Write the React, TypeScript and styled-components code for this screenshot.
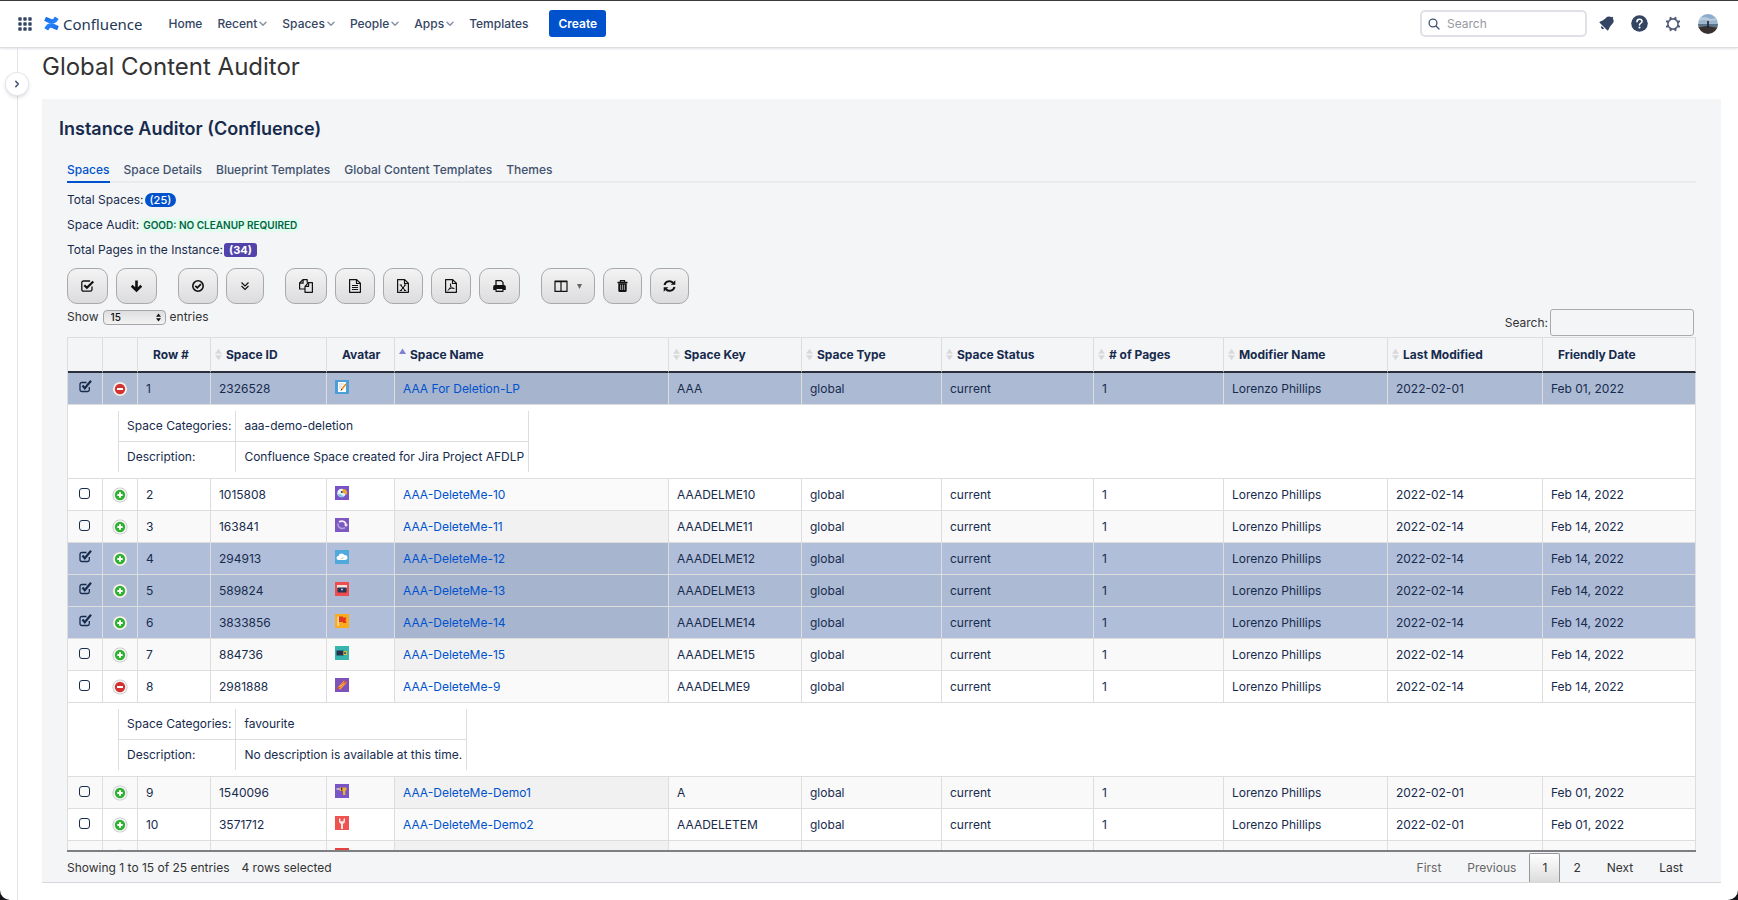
import React, { useState } from 'react';
import styled, { createGlobalStyle, css } from 'styled-components';

const GlobalStyle = createGlobalStyle`
  * { box-sizing: border-box; }
  body {
    margin: 0;
    background: #16161a;
    color: #172b4d;
    font-family: Inter, "Liberation Sans", sans-serif;
    font-size: 12px;
    line-height: 16px;
  }
  button, input, select { font: inherit; color: inherit; }
  a { color: #0052cc; text-decoration: none; }
`;

const Window = styled.div`
  min-height: 100vh;
  display: flex;
  flex-direction: column;
  background: #fff;
  border-top: 1px solid #3c383e;
  border-radius: 0 0 10px 10px;
  overflow: hidden;
`;

/* ---------- top navigation ---------- */

const TopBar = styled.header`
  height: 47px;
  flex: none;
  display: flex;
  align-items: center;
  padding: 0 20px 1px 18px;
  border-bottom: 1px solid #dcdde1;
  box-shadow: 0 1px 2px rgba(9, 30, 66, 0.12);
  color: #344563;
`;

const IconButton = styled.button`
  display: flex;
  padding: 0;
  border: 0;
  background: none;
  color: #344563;
`;

const Brand = styled.a`
  display: flex;
  align-items: center;
  gap: 4px;
  margin: 0 26px 0 12px;
  color: #253858;
  font-family: "Noto Sans", sans-serif;
  font-size: 15px;
  line-height: 20px;
`;

const Nav = styled.nav`
  display: flex;
  align-items: center;
  gap: 15px;
  flex: 1;
`;

const NavItem = styled.a`
  display: flex;
  align-items: center;
  gap: 2px;
  color: #344563;
  font-weight: 500;
`;

const CreateButton = styled.button`
  height: 27px;
  margin-left: 6px;
  padding: 0 9px;
  border: 0;
  border-radius: 3px;
  background: #0052cc;
  color: #fff;
  font-weight: 600;
`;

const TopSearch = styled.label`
  display: flex;
  align-items: center;
  gap: 7px;
  width: 167px;
  height: 27px;
  padding: 0 6px;
  border: 2px solid #dfe1e6;
  border-radius: 5px;
  color: #42526e;

  input {
    flex: 1;
    min-width: 0;
    padding: 0;
    border: 0;
    outline: 0;
    background: none;
  }
  input::placeholder { color: #97999f; opacity: 1; }
`;

const Tools = styled.div`
  display: flex;
  align-items: center;
  gap: 17px;
  margin-left: 12px;
`;

/* ---------- page frame ---------- */

const Body = styled.div`
  flex: 1;
  display: flex;
`;

const Rail = styled.aside`
  width: 18px;
  margin-right: 24px;
  flex: none;
  border-right: 1px solid #e2e4e9;
`;

const RailToggle = styled.button`
  display: flex;
  align-items: center;
  justify-content: center;
  width: 22px;
  height: 22px;
  margin: 25px 0 0 6px;
  padding: 0;
  border: 0;
  border-radius: 50%;
  background: #fff;
  box-shadow: 0 0 0 1px #e4e6ea, 0 2px 4px rgba(9, 30, 66, 0.2);
  color: #42526e;
  position: relative;
`;

const Main = styled.main`
  flex: 1;
  min-width: 0;
  padding-right: 17px;
`;

const PageTitle = styled.h1`
  margin: 0;
  padding: 3px 0 16px;
  color: #333;
  font-size: 24px;
  font-weight: 400;
  line-height: 32px;
`;

const Panel = styled.section`
  padding: 16px 25px 0;
  background: #f4f5f7;
  border-bottom: 1px solid #d5d7da;
`;

const PanelTitle = styled.h2`
  margin: 0 0 19px -8px;
  font-size: 18px;
  font-weight: 600;
  line-height: 28px;
`;

const Tabs = styled.nav`
  display: flex;
  gap: 14px;
  border-bottom: 2px solid #ebecf0;
`;

const Tab = styled.a<{ $active?: boolean }>`
  margin-bottom: -2px;
  padding-bottom: 3px;
  border-bottom: 2px solid ${p => (p.$active ? '#0052cc' : 'transparent')};
  color: ${p => (p.$active ? '#0052cc' : '#42526e')};
  font-weight: 500;
`;

const Stats = styled.div`
  display: grid;
  gap: 9px;
  padding: 9px 0 10px;
`;

const Stat = styled.div`
  display: flex;
  align-items: center;
  gap: 1px;
`;

const Badge = styled.span<{ $kind: 'count' | 'good' | 'pages' }>`
  border-radius: 3px;
  font-weight: 700;
  font-size: 11px;
  line-height: 14px;
  ${p => p.$kind === 'count' && css`padding: 0 5px; border-radius: 7px; background: #0052cc; color: #fff; font-weight: 500;`}
  ${p => p.$kind === 'good' && css`padding: 0 3px; background: #e3fcef; color: #006644; font-size: 10px; font-weight: 600;`}
  ${p => p.$kind === 'pages' && css`padding: 0 5px; background: #5243aa; color: #fff;`}
`;

/* ---------- toolbar ---------- */

const Toolbar = styled.div`
  display: flex;
  gap: 21px;
`;

const ToolGroup = styled.div`
  display: flex;
  gap: 8px;
`;

const ToolButton = styled.button`
  display: flex;
  align-items: center;
  justify-content: center;
  gap: 9px;
  height: 36px;
  padding: 0 12px;
  border: 1px solid #a9a9ab;
  border-radius: 10px;
  background: linear-gradient(#f3f3f4, #dcdcde);
  color: #111;
`;

const Controls = styled.div`
  display: flex;
  justify-content: space-between;
  padding: 5px 2px 1px 0;
  color: #333;
`;

const LengthField = styled.label`
  display: flex;
  align-items: center;
  align-self: flex-start;
  gap: 4px;
`;

const SelectBox = styled.span`
  display: grid;
  align-items: center;
  width: 63px;

  select, svg { grid-area: 1 / 1; }
  select {
    appearance: none;
    width: 100%;
    height: 15px;
    padding: 0 7px;
    border: 1px solid #a5a5a8;
    border-radius: 4px;
    background: linear-gradient(#dedee0, #f3f3f4);
    color: #111;
    font-size: 10px;
    line-height: 13px;
    font-weight: 500;
  }
  svg { justify-self: end; margin-right: 5px; pointer-events: none; }
`;

const FilterField = styled.label`
  display: flex;
  align-items: center;
  gap: 2px;

  input {
    width: 144px;
    height: 27px;
    padding: 0 5px;
    border: 1px solid #aaa;
    border-radius: 3px;
    background: transparent;
  }
`;

/* ---------- data table ---------- */

const TableScroll = styled.div`
  max-height: 515px;
  overflow: auto;
  scrollbar-width: none;
  border-bottom: 2px solid #7d7f82;
`;

const DataTable = styled.table`
  width: 100%;
  table-layout: fixed;
  border-collapse: separate;
  border-spacing: 0;
  border-left: 1px solid #ddd;
`;

const HeadCell = styled.th`
  position: sticky;
  top: 0;
  z-index: 1;
  height: 36px;
  padding: 0;
  border: solid #ddd;
  border-width: 1px 1px 2px 0;
  border-bottom-color: #2b2f3c;
  background: #f4f5f7;
  font-weight: 700;
  text-align: left;
  white-space: nowrap;
`;

const HeadLabel = styled.span`
  display: grid;
  grid-template-columns: 15px auto;
  align-items: center;
  justify-content: start;

  svg { justify-self: center; }
  span { grid-column: 2; }
`;

const Cell = styled.td`
  height: 32px;
  padding: 0 8px;
  border: solid #ddd;
  border-width: 0 1px 1px 0;
  white-space: nowrap;
`;

const NameCell = styled(Cell)``;

const IconCell = styled(Cell)<{ $raised?: boolean }>`
  padding: ${p => (p.$raised ? '0 8px 4px' : '0 7px')};
  text-align: ${p => (p.$raised ? 'left' : 'center')};

  svg { display: inline-block; vertical-align: middle; }
`;

const CheckCell = styled(IconCell)`
  padding: 0 0 4px;
  text-align: center;
`;

const DataRow = styled.tr<{ $odd: boolean; $selected: boolean }>`
  background: ${p => (p.$selected ? (p.$odd ? '#acbad4' : '#b0bed9') : p.$odd ? '#f9f9f9' : '#fff')};

  ${NameCell} {
    background: ${p => (p.$selected ? (p.$odd ? '#a6b4cd' : '#a8b5cf') : p.$odd ? '#f1f1f1' : '#fafafa')};
  }
`;

const DetailCell = styled.td`
  padding: 6px 0 6px 50px;
  border: solid #ddd;
  border-width: 0 1px 1px 0;
  background: #fff;
`;

const DetailTable = styled.table`
  border-spacing: 0;
  border-left: 1px solid #ddd;

  th, td {
    height: 30px;
    padding: 0 4px 0 8px;
    border-right: 1px solid #ddd;
    font-weight: 400;
    text-align: left;
    white-space: nowrap;
  }
  tr:first-child > * {
    height: 31px;
    border-bottom: 1px solid #ddd;
  }
`;

const CheckBox = styled.input`
  appearance: none;
  display: inline-block;
  vertical-align: middle;
  width: 11px;
  height: 11px;
  margin: 0;
  border: 1px solid #172b4d;
  border-radius: 3px;
  background: transparent;
`;

const CheckLabel = styled.label`
  display: inline-grid;
  vertical-align: middle;
  place-items: center;

  input, svg { grid-area: 1 / 1; }
  input:checked { opacity: 0; }
  svg { pointer-events: none; }
`;

const RowToggle = styled.button`
  display: inline-flex;
  padding: 0;
  border: 0;
  background: none;
  vertical-align: middle;
`;

const Footer = styled.footer`
  display: flex;
  justify-content: space-between;
  align-items: center;
  padding-top: 1px;
  color: #333;
`;

const Info = styled.div`
  display: flex;
  gap: 12px;
`;

const Pager = styled.nav`
  display: flex;
`;

const PageButton = styled.button<{ $current?: boolean }>`
  height: 29px;
  padding: 0 12px;
  border: 1px solid transparent;
  border-bottom: 0;
  border-radius: 2px 2px 0 0;
  background: none;
  color: #333;
  ${p => p.$current && css`
    width: 31px;
    padding: 0;
    border-color: #979797;
    background: linear-gradient(#fff, #dcdcdc);
  `}
  &:disabled { color: #666; }
`;

/* ---------- drawings ---------- */

const GridIcon = () => (
  <svg width="14" height="14" viewBox="0 0 14 14" fill="currentColor">
    {[0, 5, 10].map(y => [0, 5, 10].map(x => <rect key={`${x}-${y}`} x={x + 0.3} y={y + 0.3} width="3.4" height="3.4" rx="0.7" />))}
  </svg>
);

const LogoIcon = () => (
  <svg width="15" height="15" viewBox="0 0 32 32">
    <defs>
      <linearGradient id="lower" x1="1" y1="1" x2="0.2" y2="0.2">
        <stop offset="0" stopColor="#1668e0" />
        <stop offset="1" stopColor="#2684ff" />
      </linearGradient>
      <linearGradient id="upper" x1="0" y1="0" x2="0.8" y2="0.8">
        <stop offset="0" stopColor="#1668e0" />
        <stop offset="1" stopColor="#2684ff" />
      </linearGradient>
    </defs>
    <path fill="url(#lower)" d="M2.2 23.3l-1 1.700a1 1 0 0 0 .3 1.400l6.600 4a1 1 0 0 0 1.400-.3l1-1.600c2.600-4.300 5.200-3.800 9.900-1.500l6.500 3.100a1 1 0 0 0 1.300-.5l3.100-7.100a1 1 0 0 0-.5-1.300l-6.500-3.100C15.400 13.800 8 14 2.200 23.300z" />
    <path fill="url(#upper)" d="M29.800 8.700l1-1.700a1 1 0 0 0-.3-1.400l-6.600-4a1 1 0 0 0-1.400.3l-1 1.600c-2.600 4.300-5.200 3.800-9.900 1.500L5.100 1.900a1 1 0 0 0-1.300.5L.7 9.500a1 1 0 0 0 .5 1.300l6.500 3.100C16.600 18.200 24 18 29.800 8.700z" />
  </svg>
);

const ChevronDown = () => (
  <svg width="8" height="6" viewBox="0 0 8 6" fill="none" stroke="#8993a4" strokeWidth="1.5" strokeLinecap="round" strokeLinejoin="round">
    <path d="M1 1.300l3 3 3-3" />
  </svg>
);

const ChevronRight = () => (
  <svg width="6" height="8" viewBox="0 0 6 8" fill="none" stroke="currentColor" strokeWidth="1.5" strokeLinecap="round" strokeLinejoin="round">
    <path d="M1.800 1.400L4.400 4 1.800 6.600" />
  </svg>
);

const SearchIcon = () => (
  <svg width="12" height="12" viewBox="0 0 12 12" fill="none" stroke="currentColor" strokeWidth="1.300" strokeLinecap="round">
    <circle cx="5" cy="5" r="3.900" />
    <path d="M8 8l3 3" />
  </svg>
);

const BellIcon = () => (
  <svg width="15" height="15" viewBox="3.500 3.500 17 17" fill="currentColor">
    <path d="M6.485 17.669a2 2 0 0 0 2.829 0l-2.829-2.830a2 2 0 0 0 0 2.830zm4.897-12.191l-.725.725c-.782.782-2.210 1.813-3.206 2.311l-3.017 1.509c-.495.248-.584.774-.187 1.171l8.556 8.556c.398.396.922.313 1.171-.188l1.510-3.016c.494-.988 1.526-2.420 2.311-3.206l.725-.726a5.048 5.048 0 0 0 .640-6.356 1.010 1.010 0 1 0-1.354-1.494c-.023.025-.046.049-.066.075a5.043 5.043 0 0 0-2.788-.840 5.036 5.036 0 0 0-3.570 1.478z" />
  </svg>
);

const HelpIcon = () => (
  <svg width="17" height="17" viewBox="0 0 17 17">
    <circle cx="8.500" cy="8.500" r="8.300" fill="currentColor" />
    <path d="M6 6.700c0-1.500 1-2.400 2.500-2.400s2.500.9 2.500 2.200c0 1.700-2.500 1.600-2.500 3.400" fill="none" stroke="#fff" strokeWidth="1.600" strokeLinecap="round" />
    <circle cx="8.500" cy="12.500" r="1.050" fill="#fff" />
  </svg>
);

const GearIcon = () => (
  <svg width="16" height="16" viewBox="0 0 16 16" fill="none" stroke="#505f79">
    <circle cx="8" cy="8" r="5.100" strokeWidth="1.600" />
    {[0, 45, 90, 135, 180, 225, 270, 315].map(a => (
      <path key={a} d="M8 2.600V1.500" strokeWidth="2.200" strokeLinecap="round" transform={`rotate(${a + 22.5} 8 8)`} />
    ))}
  </svg>
);

const UserAvatar = () => (
  <svg width="20" height="20" viewBox="0 0 20 20">
    <defs>
      <clipPath id="user"><circle cx="10" cy="10" r="10" /></clipPath>
      <linearGradient id="sky" x1="0" y1="0" x2="0" y2="1">
        <stop offset="0" stopColor="#86a9cf" />
        <stop offset="1" stopColor="#a9bccb" />
      </linearGradient>
    </defs>
    <g clipPath="url(#user)">
      <rect width="20" height="13" fill="url(#sky)" />
      <path d="M0 4l7-1 6 2 7-1v2l-8 1-6-1-6 1z" fill="#b9cbdc" />
      <rect y="10" width="20" height="4" fill="#5c7486" />
      <path d="M0 13.500l9-1.500 11 2v6H0z" fill="#37302e" />
      <path d="M9.200 8h1.700v6H9.200z" fill="#1e2a44" />
      <circle cx="10.050" cy="7.800" r="1" fill="#28324a" />
    </g>
  </svg>
);

const ICONS: Record<string, { w: number; body: React.ReactNode }> = {
  'Select all': { w: 15, body: <><path d="M12 8.500v3a1.700 1.700 0 0 1-1.700 1.700H3.500a1.700 1.700 0 0 1-1.700-1.700V4.700A1.700 1.700 0 0 1 3.500 3h6.600" fill="none" stroke="currentColor" strokeWidth="1.300" /><path d="M4.300 7.300l2.600 2.500L13.300 3.500" fill="none" stroke="currentColor" strokeWidth="2.200" /></> },
  'Move down': { w: 15, body: <path d="M7.500 2.500v9.500M2.700 7.800l4.800 4.700 4.800-4.700" fill="none" stroke="currentColor" strokeWidth="2.600" /> },
  'Select page': { w: 14, body: <><circle cx="7" cy="8" r="5.200" fill="none" stroke="currentColor" strokeWidth="1.600" /><path d="M4.300 7.800l2 2 3.600-3.700" fill="none" stroke="currentColor" strokeWidth="1.800" /></> },
  'Expand all': { w: 12, body: <path d="M2.500 4.500L6 8l3.500-3.500M2.500 8L6 11.500 9.500 8" fill="none" stroke="currentColor" strokeWidth="1.200" /> },
  Copy: { w: 16, body: <path d="M7 11H1.600V5L4.900 1.700h4.300v3M1.600 5.200h3.500V1.800M7 8.300v6h7.400V4.700h-4L7 8.300h3.600V4.800" fill="none" stroke="currentColor" strokeWidth="1.200" strokeLinejoin="round" /> },
  'Export text': { w: 14, body: <><path d="M1.600 1.600h7l3.800 3.700v9H1.600zM8.500 1.800v3.700h3.700" fill="none" stroke="currentColor" strokeWidth="1.200" strokeLinejoin="round" /><path d="M4 7.500h6M4 9.500h6M4 11.500h6" stroke="currentColor" /></> },
  'Export Excel': { w: 14, body: <><path d="M1.600 1.600h7l3.800 3.700v9H1.600zM8.500 1.800v3.700h3.700" fill="none" stroke="currentColor" strokeWidth="1.200" strokeLinejoin="round" /><path d="M4.600 7l4.500 5.500M9.300 7l-4.500 5.500M3.700 7h2.200M8 7h2.200M3.700 12.500h2.200M8 12.500h2.200" fill="none" stroke="currentColor" strokeWidth="1.100" /></> },
  'Export PDF': { w: 14, body: <><path d="M1.600 1.600h7l3.800 3.700v9H1.600zM8.500 1.800v3.700h3.700" fill="none" stroke="currentColor" strokeWidth="1.200" strokeLinejoin="round" /><path d="M6.500 5.500c-.5 2 .9 4.800 3.800 5.200M6.600 6c.5 3-1 5.500-3 6.600M4.500 11.200c2-1 4-1.100 5.800-.8" fill="none" stroke="currentColor" strokeWidth="0.900" /></> },
  Print: { w: 15, body: <><path d="M4 8V2.600h5.200L11 4.400V8" fill="none" stroke="currentColor" strokeWidth="1.300" /><path d="M2.800 7h9.400a1.600 1.600 0 0 1 1.600 1.600V12h-2.300v1.900h-8V12H1.200V8.600A1.600 1.600 0 0 1 2.800 7z" fill="currentColor" /><path d="M4.600 11h5.800v1.700H4.600z" fill="#e6e6e8" /></> },
  Columns: { w: 14, body: <path d="M1 3h12v10.400H1zM7 3v10M1 3.600h12" fill="none" stroke="currentColor" strokeWidth="1.200" strokeLinejoin="round" /> },
  Delete: { w: 13, body: <><path d="M1.500 4.500h10M4.500 4.300V2.600h4v1.700" fill="none" stroke="currentColor" strokeWidth="1.300" /><path d="M2.300 5.200h8.400v7.300a1.500 1.500 0 0 1-1.500 1.500H3.800a1.500 1.500 0 0 1-1.500-1.500z" fill="currentColor" /><path d="M4.600 6.700v5.300M6.500 6.700v5.300M8.400 6.700v5.300" stroke="#d9d9da" strokeWidth="0.700" /></> },
  Refresh: { w: 13, body: <><path d="M1.500 7A5 5 0 0 1 10 4.800M11.500 9A5 5 0 0 1 3 11.200" fill="none" stroke="currentColor" strokeWidth="2" /><path d="M12.300 2.200V6.800H7.700zM.7 13.800V9.200h4.600z" fill="currentColor" /></> },
};

const ToolIcon = ({ name }: { name: string }) => (
  <svg width={ICONS[name].w} height="16" viewBox={`0 0 ${ICONS[name].w} 16`}>{ICONS[name].body}</svg>
);

const Caret = () => (
  <svg width="5" height="5" viewBox="0 0 5 5" fill="#666"><path d="M0 0h5L2.500 5z" /></svg>
);

const SelectArrows = () => (
  <svg width="5" height="9" viewBox="0 0 5 9" fill="#111"><path d="M0 3.700L2.500.5 5 3.700zM0 5.300L2.500 8.500 5 5.300z" /></svg>
);

const SortIcon = ({ up }: { up?: boolean }) =>
  up ? (
    <svg width="7" height="13" viewBox="0 0 7 13" fill="#7f7fd5"><path d="M0 6l3.500-5.500L7 6z" /></svg>
  ) : (
    <svg width="7" height="13" viewBox="0 0 7 13" fill="#d9d9dc"><path d="M0 5.800l3.500-5L7 5.800zM0 7.200l3.500 5 3.500-5z" /></svg>
  );

const CheckedIcon = () => (
  <svg width="14" height="14" viewBox="0 0 14 14" fill="none" stroke="#172b4d">
    <path d="M11.300 7v2.700a1.800 1.800 0 0 1-1.800 1.800H3.800A1.800 1.800 0 0 1 2 9.700V4.300a1.800 1.800 0 0 1 1.800-1.800h4.700" strokeWidth="1.300" />
    <path d="M4.500 5.500l2.300 2.700L13 .8" strokeWidth="2.200" />
  </svg>
);

const ToggleIcon = ({ open }: { open: boolean }) => (
  <svg width="16" height="16" viewBox="0 0 16 16">
    <circle cx="8" cy="8" r="7.600" fill="#c4c6c8" />
    <circle cx="8" cy="8" r="6.800" fill="#f6f6f6" />
    <circle cx="8" cy="8" r="5.200" fill={open ? '#d33333' : '#31b131'} />
    <path d={open ? 'M5 8h6' : 'M5.300 8h5.400M8 5.300v5.400'} stroke="#fff" strokeWidth="2" />
  </svg>
);

const AVATARS: Record<string, React.ReactNode> = {
  note: <><rect width="14" height="14" fill="#4a9fd8" /><path d="M3 2h8v10H3z" fill="#fff" /><path d="M4 4h5M4 6h3M4 8h2" stroke="#b6c4d2" strokeWidth="0.800" /><path d="M11 4L6.500 9.500" stroke="#e98a1f" strokeWidth="1.700" /><path d="M6.800 9l-.8 1.600" stroke="#333" /></>,
  bird: <><rect width="14" height="14" fill="#7a52c7" /><circle cx="6.500" cy="7" r="4.300" fill="#e4f1f6" /><path d="M7.500 3c4 0 5 2 4.600 5.500L8 7z" fill="#f6a623" /><circle cx="6.800" cy="6" r="1" fill="#24344f" /><path d="M2.800 8.500c1.200 3 4 3.300 6 2L5.500 8z" fill="#7ecbe0" /></>,
  loop: <><rect width="14" height="14" fill="#7e57c2" /><path d="M4 4C7 2 11 3.500 11 7.500" fill="none" stroke="#f2effb" strokeWidth="1.700" /><path d="M2.700 5.500C3 10 6.500 11.500 10 9.800" fill="none" stroke="#aaa6d8" strokeWidth="1.600" /><path d="M9 6.500h4l-2 2.500z" fill="#f2effb" /></>,
  cloud: <><rect width="14" height="14" fill="#4fa9dd" /><path d="M3.500 10a2 2 0 0 1 0-4 3.200 3.200 0 0 1 6-.8A2.400 2.400 0 0 1 10.500 10z" fill="#fff" /><path d="M6 8l1 1 1.500-2" stroke="#b9b3a0" fill="none" strokeWidth="0.700" /></>,
  drawer: <><rect width="14" height="14" fill="#ef4c4f" /><path d="M2 3h10v3H2z" fill="#f3e3df" /><path d="M2.500 5.500h9V10.500h-9z" fill="#273554" /><rect x="6" y="6.700" width="2" height="1.600" fill="#9fc3e6" /></>,
  flag: <><rect width="14" height="14" fill="#fcab1e" /><path d="M2.500 2.500h1.300V12H2.500z" fill="#fdeacb" /><path d="M4 2.500h4v1h3.500L10.500 6l1 3H8V8H4z" fill="#e2361f" /></>,
  camera: <><rect width="14" height="14" fill="#35b5ae" /><path d="M1.500 4.500h7v5h-7z" fill="#253250" /><path d="M8.500 5h3.500v4H8.500z" fill="#e7b73b" /><path d="M9.300 6h1.500v2H9.300z" fill="#3d4a43" /></>,
  hotdog: <><rect width="14" height="14" fill="#7e52b8" /><path d="M2.500 9.500l6.500-7 2.700 2.200-6.500 7z" fill="#f0a13a" /><path d="M2.500 11L11 3" stroke="#dd4a2a" strokeWidth="1.600" /><path d="M4 8.500l1 .5 1-2 1 .5 1-2 1 .5" stroke="#fbd57c" fill="none" strokeWidth="0.700" /></>,
  drill: <><rect width="14" height="14" fill="#7a55c7" /><path d="M4.500 3.500h7v3h-1.200V11H8V7H4.500z" fill="#eeb02f" /><path d="M1.500 5h3" stroke="#eee" strokeWidth="1.200" /><path d="M6 3.500h1.300v3H6z" fill="#2f3550" /></>,
  wrench: <><rect width="14" height="14" fill="#f0524f" /><path d="M4 2v3.500C4 7 5.700 7.500 6 8v5h2V8c.3-.5 2-1 2-2.500V2L8.500 3v2.300h-3V3z" fill="#f3e9e6" /></>,
  red: <rect width="14" height="14" fill="#e5413f" />,
};

const SpaceAvatar = ({ kind }: { kind: string }) => (
  <svg width="14" height="14" viewBox="0 0 14 14">{AVATARS[kind]}</svg>
);

/* ---------- data ---------- */

type Space = {
  id: string;
  avatar: string;
  name: string;
  spaceKey: string;
  date: [string, string];
  detail?: [string, string];
  selected?: boolean;
};

const FEB1: [string, string] = ['2022-02-01', 'Feb 01, 2022'];
const FEB14: [string, string] = ['2022-02-14', 'Feb 14, 2022'];

const SPACES: Space[] = [
  { id: '2326528', avatar: 'note', name: 'AAA For Deletion-LP', spaceKey: 'AAA', date: FEB1, selected: true, detail: ['aaa-demo-deletion', 'Confluence Space created for Jira Project AFDLP'] },
  { id: '1015808', avatar: 'bird', name: 'AAA-DeleteMe-10', spaceKey: 'AAADELME10', date: FEB14 },
  { id: '163841', avatar: 'loop', name: 'AAA-DeleteMe-11', spaceKey: 'AAADELME11', date: FEB14 },
  { id: '294913', avatar: 'cloud', name: 'AAA-DeleteMe-12', spaceKey: 'AAADELME12', date: FEB14, selected: true },
  { id: '589824', avatar: 'drawer', name: 'AAA-DeleteMe-13', spaceKey: 'AAADELME13', date: FEB14, selected: true },
  { id: '3833856', avatar: 'flag', name: 'AAA-DeleteMe-14', spaceKey: 'AAADELME14', date: FEB14, selected: true },
  { id: '884736', avatar: 'camera', name: 'AAA-DeleteMe-15', spaceKey: 'AAADELME15', date: FEB14 },
  { id: '2981888', avatar: 'hotdog', name: 'AAA-DeleteMe-9', spaceKey: 'AAADELME9', date: FEB14, detail: ['favourite', 'No description is available at this time.'] },
  { id: '1540096', avatar: 'drill', name: 'AAA-DeleteMe-Demo1', spaceKey: 'A', date: FEB1 },
  { id: '3571712', avatar: 'wrench', name: 'AAA-DeleteMe-Demo2', spaceKey: 'AAADELETEM', date: FEB1 },
];

const COLUMNS: { label: string; width: number; sort?: 'both' | 'up' }[] = [
  { label: '', width: 35 },
  { label: '', width: 35 },
  { label: 'Row #', width: 73 },
  { label: 'Space ID', width: 116, sort: 'both' },
  { label: 'Avatar', width: 68 },
  { label: 'Space Name', width: 274, sort: 'up' },
  { label: 'Space Key', width: 133, sort: 'both' },
  { label: 'Space Type', width: 140, sort: 'both' },
  { label: 'Space Status', width: 152, sort: 'both' },
  { label: '# of Pages', width: 130, sort: 'both' },
  { label: 'Modifier Name', width: 164, sort: 'both' },
  { label: 'Last Modified', width: 155, sort: 'both' },
  { label: 'Friendly Date', width: 153 },
];

const TOTAL_WIDTH = COLUMNS.reduce((sum, c) => sum + c.width, 0);

const TOOL_GROUPS = [
  ['Select all', 'Move down'],
  ['Select page', 'Expand all'],
  ['Copy', 'Export text', 'Export Excel', 'Export PDF', 'Print'],
  ['Columns', 'Delete', 'Refresh'],
];

const NAV: [string, boolean][] = [['Home', false], ['Recent', true], ['Spaces', true], ['People', true], ['Apps', true], ['Templates', false]];
const TABS = ['Spaces', 'Space Details', 'Blueprint Templates', 'Global Content Templates', 'Themes'];

/* ---------- components ---------- */

const SpaceRow = ({ space, index }: { space: Space; index: number }) => {
  const [selected, setSelected] = useState(!!space.selected);
  const [open, setOpen] = useState(!!space.detail);
  const detail = space.detail ?? ['', 'No description is available at this time.'];
  return (
    <>
      <DataRow $odd={index % 2 === 0} $selected={selected}>
        <CheckCell>
          <CheckLabel>
            <CheckBox type="checkbox" aria-label={`Select ${space.name}`} checked={selected} onChange={e => setSelected(e.target.checked)} />
            {selected && <CheckedIcon />}
          </CheckLabel>
        </CheckCell>
        <IconCell>
          <RowToggle aria-label={open ? 'Hide details' : 'Show details'} onClick={() => setOpen(!open)}>
            <ToggleIcon open={open} />
          </RowToggle>
        </IconCell>
        <Cell>{index + 1}</Cell>
        <Cell>{space.id}</Cell>
        <IconCell $raised><SpaceAvatar kind={space.avatar} /></IconCell>
        <NameCell><a href="#space">{space.name}</a></NameCell>
        <Cell>{space.spaceKey}</Cell>
        <Cell>global</Cell>
        <Cell>current</Cell>
        <Cell>1</Cell>
        <Cell>Lorenzo Phillips</Cell>
        <Cell>{space.date[0]}</Cell>
        <Cell>{space.date[1]}</Cell>
      </DataRow>
      {open && (
        <tr>
          <DetailCell colSpan={COLUMNS.length}>
            <DetailTable>
              <tbody>
                <tr><th scope="row">Space Categories:</th><td>{detail[0]}</td></tr>
                <tr><th scope="row">Description:</th><td>{detail[1]}</td></tr>
              </tbody>
            </DetailTable>
          </DetailCell>
        </tr>
      )}
    </>
  );
};

const PartialRow = () => (
  <DataRow $odd $selected={false}>
    <Cell />
    <IconCell><RowToggle aria-label="Show details"><ToggleIcon open={false} /></RowToggle></IconCell>
    <Cell />
    <Cell />
    <IconCell $raised><SpaceAvatar kind="red" /></IconCell>
    <NameCell />
    <Cell /><Cell /><Cell /><Cell /><Cell /><Cell /><Cell />
  </DataRow>
);

export default function App() {
  return (
    <Window>
      <GlobalStyle />
      <TopBar>
        <IconButton aria-label="App switcher"><GridIcon /></IconButton>
        <Brand href="#home"><LogoIcon />Confluence</Brand>
        <Nav>
          {NAV.map(([label, menu]) => (
            <NavItem href="#nav" key={label}>{label}{menu && <ChevronDown />}</NavItem>
          ))}
          <CreateButton>Create</CreateButton>
        </Nav>
        <TopSearch><SearchIcon /><input type="text" placeholder="Search" aria-label="Search" /></TopSearch>
        <Tools>
          <IconButton aria-label="Notifications"><BellIcon /></IconButton>
          <IconButton aria-label="Help"><HelpIcon /></IconButton>
          <IconButton aria-label="Settings"><GearIcon /></IconButton>
          <IconButton aria-label="Profile"><UserAvatar /></IconButton>
        </Tools>
      </TopBar>
      <Body>
        <Rail><RailToggle aria-label="Expand sidebar"><ChevronRight /></RailToggle></Rail>
        <Main>
          <PageTitle>Global Content Auditor</PageTitle>
          <Panel>
            <PanelTitle>Instance Auditor (Confluence)</PanelTitle>
            <Tabs>
              {TABS.map((t, i) => <Tab href="#tab" key={t} $active={i === 0}>{t}</Tab>)}
            </Tabs>
            <Stats>
              <Stat>Total Spaces: <Badge $kind="count">(25)</Badge></Stat>
              <Stat>Space Audit: <Badge $kind="good">GOOD: NO CLEANUP REQUIRED</Badge></Stat>
              <Stat>Total Pages in the Instance: <Badge $kind="pages">(34)</Badge></Stat>
            </Stats>
            <Toolbar>
              {TOOL_GROUPS.map(group => (
                <ToolGroup key={group[0]}>
                  {group.map(name => (
                    <ToolButton key={name} aria-label={name}>
                      <ToolIcon name={name} />
                      {name === 'Columns' && <Caret />}
                    </ToolButton>
                  ))}
                </ToolGroup>
              ))}
            </Toolbar>
            <Controls>
              <LengthField>
                Show
                <SelectBox><select defaultValue="15"><option>15</option><option>25</option></select><SelectArrows /></SelectBox>
                entries
              </LengthField>
              <FilterField>Search: <input type="search" /></FilterField>
            </Controls>
            <TableScroll>
              <DataTable>
                <colgroup>
                  {COLUMNS.map((c, i) => <col key={i} style={{ width: `${(c.width / TOTAL_WIDTH) * 100}%` }} />)}
                </colgroup>
                <thead>
                  <tr>
                    {COLUMNS.map((c, i) => (
                      <HeadCell key={i} scope="col">
                        <HeadLabel>{c.sort && <SortIcon up={c.sort === 'up'} />}<span>{c.label}</span></HeadLabel>
                      </HeadCell>
                    ))}
                  </tr>
                </thead>
                <tbody>
                  {SPACES.map((s, i) => <SpaceRow key={s.id} space={s} index={i} />)}
                  <PartialRow />
                </tbody>
              </DataTable>
            </TableScroll>
            <Footer>
              <Info><span>Showing 1 to 15 of 25 entries</span><span>4 rows selected</span></Info>
              <Pager>
                <PageButton disabled>First</PageButton>
                <PageButton disabled>Previous</PageButton>
                <PageButton $current>1</PageButton>
                <PageButton>2</PageButton>
                <PageButton>Next</PageButton>
                <PageButton>Last</PageButton>
              </Pager>
            </Footer>
          </Panel>
        </Main>
      </Body>
    </Window>
  );
}
